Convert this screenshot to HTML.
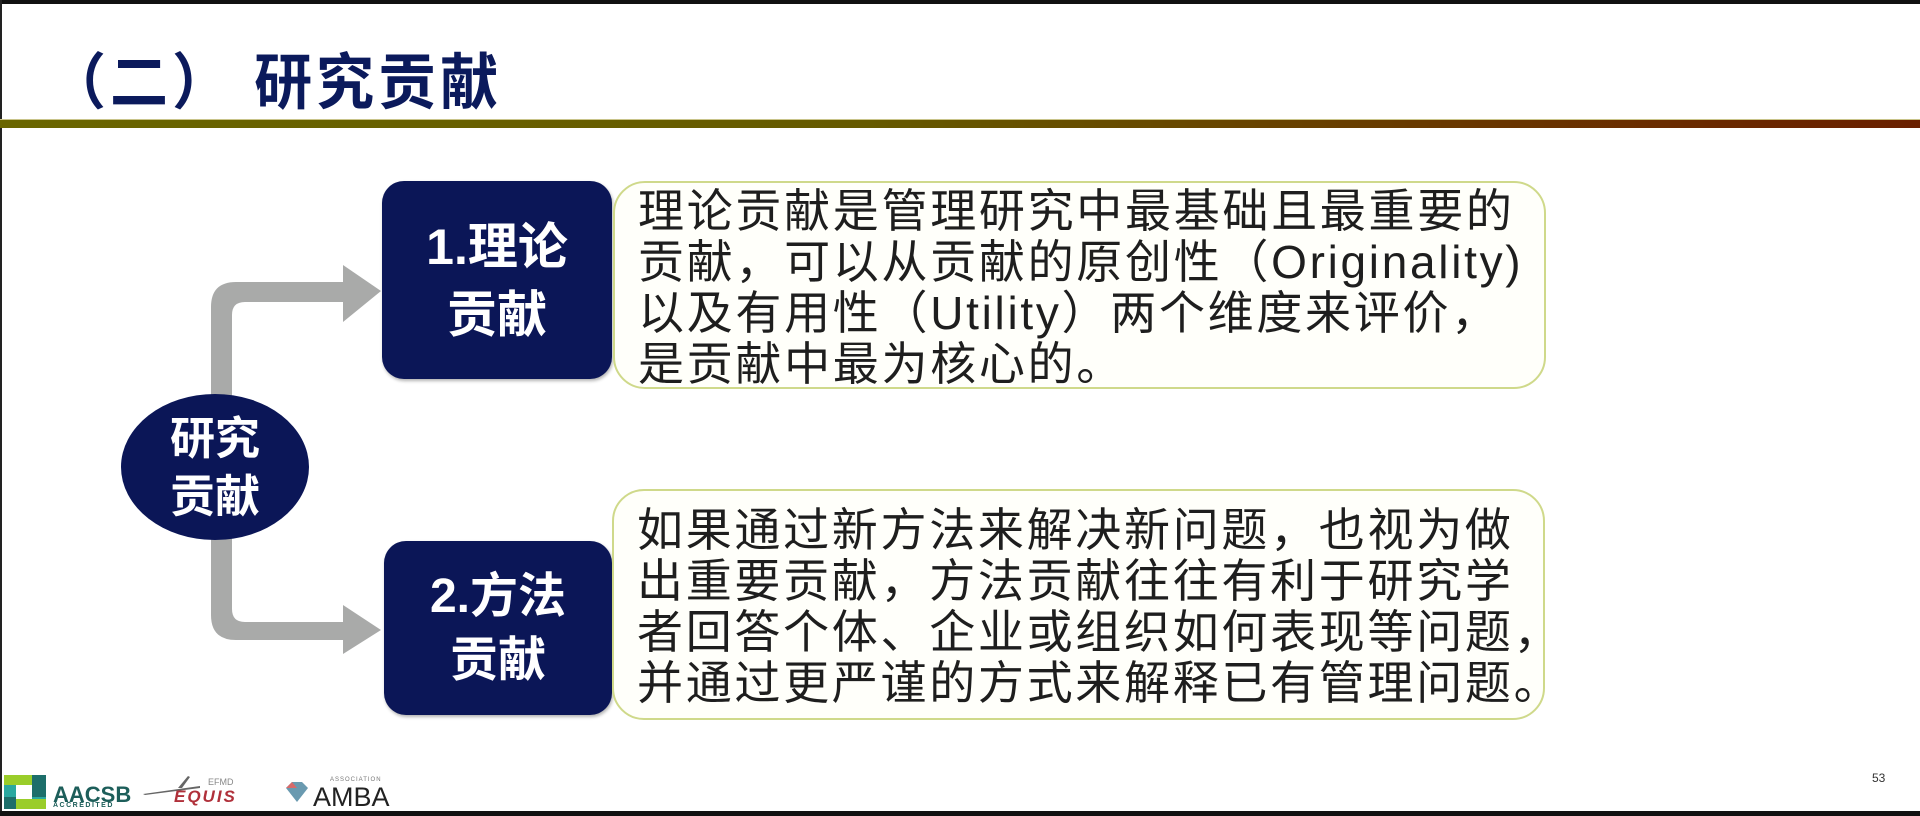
<!DOCTYPE html>
<html><head><meta charset="utf-8"><style>
*{margin:0;padding:0;box-sizing:border-box}
body{width:1920px;height:816px;overflow:hidden;background:#fff;position:relative;font-family:"Liberation Sans","Noto Sans CJK SC",sans-serif}
.abs{position:absolute}
.title{left:48px;top:33px;font-size:58px;font-weight:bold;color:#0b1a5c;letter-spacing:4px;white-space:nowrap;transform:scaleY(1.05);transform-origin:top left}
.bar{left:0;top:119px;width:1920px;height:9px;background:linear-gradient(90deg,#6a6600,#665a00 45%,#6a2800 90%,#6a2000);border-top:1px solid #c9c48a}
.nav{background:#0b1657;color:#fff;font-weight:bold;text-align:center;border-radius:22px;box-shadow:1px 2px 3px rgba(0,0,0,.3)}
.txt{border:2px solid #cfd98a;border-radius:32px;background:#fffffa;color:#1e1e1e;font-size:46px;line-height:51px;padding-left:23px;white-space:nowrap;letter-spacing:2.7px}
</style></head><body>
<div class="abs" style="left:0;top:0;width:1920px;height:4px;background:#111"></div>
<div class="abs" style="left:0;top:0;width:2px;height:816px;background:#222"></div>
<div class="abs" style="left:0;top:811px;width:1920px;height:5px;background:#111"></div>
<div class="abs title">（二） 研究贡献</div>
<div class="abs bar"></div>

<svg class="abs" style="left:0;top:0" width="1920" height="816">
<path d="M381 291 L343 265 L343 282 L236 282 Q211 282 211 307 L211 400 L232 400 L232 315 Q232 302 245 302 L343 302 L343 322 Z" fill="#a9aaa9"/>
<path d="M381 630 L343 605 L343 622 L245 622 Q232 622 232 609 L232 535 L211 535 L211 615 Q211 640 236 640 L343 640 L343 654 Z" fill="#a9aaa9"/>
<ellipse cx="215" cy="467" rx="94" ry="73" fill="#0b1657"/>
</svg>
<div class="abs" style="left:121px;top:410px;width:188px;text-align:center;color:#fff;font-weight:bold;font-size:45px;line-height:58px">研究<br>贡献</div>

<div class="abs nav" style="left:382px;top:181px;width:230px;height:198px;font-size:50px;line-height:68px;padding-top:32px">1.理论<br>贡献</div>
<div class="abs nav" style="left:384px;top:541px;width:228px;height:174px;font-size:48px;line-height:64px;padding-top:24px">2.方法<br>贡献</div>

<div class="abs txt" style="left:613px;top:181px;width:933px;height:208px;padding-top:3px">理论贡献是管理研究中最基础且最重要的<br>贡献，可以从贡献的原创性（Originality)<br>以及有用性（Utility）两个维度来评价，<br>是贡献中最为核心的。</div>
<div class="abs txt" style="left:612px;top:489px;width:933px;height:231px;padding-top:14px">如果通过新方法来解决新问题，也视为做<br>出重要贡献，方法贡献往往有利于研究学<br>者回答个体、企业或组织如何表现等问题，<br>并通过更严谨的方式来解释已有管理问题。</div>

<!-- logos -->
<svg class="abs" style="left:4px;top:775px" width="42" height="34">
<rect x="0" y="0" width="42" height="34" fill="#2aa8a0"/>
<rect x="0" y="0" width="28" height="10" fill="#9acd2a"/>
<rect x="28" y="0" width="14" height="22" fill="#1d6e6a"/>
<rect x="12" y="24" width="30" height="10" fill="#9acd2a"/>
<rect x="0" y="22" width="12" height="12" fill="#1d6e6a"/>
<rect x="12" y="10" width="16" height="14" fill="#fff"/>
</svg>
<div class="abs" style="left:53px;top:782px;font-size:22px;font-weight:bold;color:#1d5e5a">AACSB</div>
<div class="abs" style="left:53px;top:802px;font-size:7px;font-weight:bold;color:#1d5e5a;letter-spacing:1.5px">ACCREDITED</div>
<svg class="abs" style="left:140px;top:774px" width="120" height="36">
<path d="M3 20 L60 12 L60 14 L5 21Z" fill="#666"/><path d="M38 14 L48 2 L50 3 L42 14Z" fill="#666"/>
<text x="68" y="11" font-size="9" fill="#888" font-family="Liberation Sans">EFMD</text>
<text x="34" y="28" font-size="17" font-weight="bold" font-style="italic" fill="#b0303a" font-family="Liberation Sans" letter-spacing="2">EQUIS</text>
</svg>
<svg class="abs" style="left:284px;top:780px" width="26" height="24"><path d="M2 8 L8 2 L18 2 L24 8 L13 22Z" fill="#6a9ab0"/><path d="M2 8 L8 2 L13 8Z" fill="#d86a6a"/></svg>
<div class="abs" style="left:313px;top:782px;font-size:27px;color:#222">AMBA</div>
<div class="abs" style="left:330px;top:777px;font-size:6px;color:#777;letter-spacing:1px">ASSOCIATION</div>
<div class="abs" style="left:1872px;top:771px;font-size:12px;color:#333">53</div>
</body></html>
